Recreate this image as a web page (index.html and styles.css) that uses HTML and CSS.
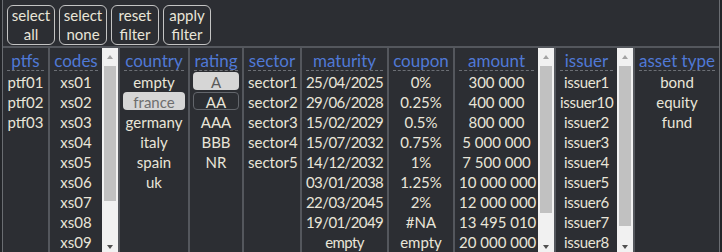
FILE: index.html
```html
<!DOCTYPE html>
<html>
<head>
<meta charset="utf-8">
<link rel="stylesheet" href="styles.css">
</head>
<body>
<div class="app">
  <div class="toolbar">
    <button class="btn">select<br>all</button>
    <button class="btn">select<br>none</button>
    <button class="btn">reset<br>filter</button>
    <button class="btn">apply<br>filter</button>
  </div>
  <div class="columns">
    <div class="col w-ptfs">
      <div class="list">
        <div class="hdr">ptfs</div>
        <div class="item">ptf01</div>
        <div class="item">ptf02</div>
        <div class="item">ptf03</div>
      </div>
    </div>
    <div class="col w-codes">
      <div class="list">
        <div class="hdr">codes</div>
        <div class="item">xs01</div>
        <div class="item">xs02</div>
        <div class="item">xs03</div>
        <div class="item">xs04</div>
        <div class="item">xs05</div>
        <div class="item">xs06</div>
        <div class="item">xs07</div>
        <div class="item">xs08</div>
        <div class="item">xs09</div>
      </div>
      <div class="scroll">
        <div class="arr-up"><span class="tri-up"></span></div>
        <div class="thumb" style="height:135px"></div>
        <div class="track-rest"></div>
        <div class="arr-down"><span class="tri-down"></span></div>
      </div>
    </div>
    <div class="col w-country">
      <div class="list">
        <div class="hdr">country</div>
        <div class="item">empty</div>
        <div class="item sel dim">france</div>
        <div class="item">germany</div>
        <div class="item">italy</div>
        <div class="item">spain</div>
        <div class="item">uk</div>
      </div>
    </div>
    <div class="col w-rating">
      <div class="list">
        <div class="hdr">rating</div>
        <div class="item sel">A</div>
        <div class="item focus">AA</div>
        <div class="item">AAA</div>
        <div class="item">BBB</div>
        <div class="item">NR</div>
      </div>
    </div>
    <div class="col w-sector">
      <div class="list">
        <div class="hdr">sector</div>
        <div class="item">sector1</div>
        <div class="item">sector2</div>
        <div class="item">sector3</div>
        <div class="item">sector4</div>
        <div class="item">sector5</div>
      </div>
    </div>
    <div class="col w-maturity">
      <div class="list tight">
        <div class="hdr">maturity</div>
        <div class="item">25/04/2025</div>
        <div class="item">29/06/2028</div>
        <div class="item">15/02/2029</div>
        <div class="item">15/07/2032</div>
        <div class="item">14/12/2032</div>
        <div class="item">03/01/2038</div>
        <div class="item">22/03/2045</div>
        <div class="item">19/01/2049</div>
        <div class="item">empty</div>
      </div>
    </div>
    <div class="col w-coupon">
      <div class="list">
        <div class="hdr">coupon</div>
        <div class="item">0%</div>
        <div class="item">0.25%</div>
        <div class="item">0.5%</div>
        <div class="item">0.75%</div>
        <div class="item">1%</div>
        <div class="item">1.25%</div>
        <div class="item">2%</div>
        <div class="item">#NA</div>
        <div class="item">empty</div>
      </div>
    </div>
    <div class="col w-amount">
      <div class="list">
        <div class="hdr">amount</div>
        <div class="item">300 000</div>
        <div class="item">400 000</div>
        <div class="item">800 000</div>
        <div class="item">5 000 000</div>
        <div class="item">7 500 000</div>
        <div class="item">10 000 000</div>
        <div class="item">12 000 000</div>
        <div class="item">13 495 010</div>
        <div class="item">20 000 000</div>
      </div>
      <div class="scroll">
        <div class="arr-up"><span class="tri-up"></span></div>
        <div class="thumb" style="height:147px"></div>
        <div class="track-rest"></div>
        <div class="arr-down"><span class="tri-down"></span></div>
      </div>
    </div>
    <div class="col w-issuer">
      <div class="list semi">
        <div class="hdr">issuer</div>
        <div class="item">issuer1</div>
        <div class="item">issuer10</div>
        <div class="item">issuer2</div>
        <div class="item">issuer3</div>
        <div class="item">issuer4</div>
        <div class="item">issuer5</div>
        <div class="item">issuer6</div>
        <div class="item">issuer7</div>
        <div class="item">issuer8</div>
      </div>
      <div class="scroll">
        <div class="arr-up"><span class="tri-up"></span></div>
        <div class="thumb" style="height:160px"></div>
        <div class="track-rest"></div>
        <div class="arr-down"><span class="tri-down"></span></div>
      </div>
    </div>
    <div class="col w-asset last">
      <div class="list">
        <div class="hdr">asset type</div>
        <div class="item">bond</div>
        <div class="item">equity</div>
        <div class="item">fund</div>
      </div>
    </div>
  </div>
</div>
</body>
</html>
```
FILE: styles.css
```css
html, body {
  margin: 0;
  padding: 0;
  background: #232529;
  height: 252px;
  overflow: hidden;
}
.app {
  margin-left: 2px;
  width: 716px;
  height: 252px;
  border-left: 1px solid #6a6d72;
  border-right: 1px solid #6a6d72;
  background: #2c2e33;
  font-family: Lato, "Noto Sans", sans-serif;
  color: #e9e5d9;
  display: flex;
  flex-direction: column;
  overflow: hidden;
}
.toolbar {
  height: 48px;
  box-sizing: border-box;
  padding: 5px 0 0 4px;
  border-bottom: 2px solid #54575d;
  display: flex;
  gap: 4px;
  align-items: flex-start;
  flex: none;
}
.btn {
  width: 48px;
  height: 40px;
  box-sizing: border-box;
  background: #2c2e33;
  border: 1.5px solid #c4c4c4;
  border-radius: 6px;
  color: #e9e5d9;
  font-family: inherit;
  font-size: 15px;
  line-height: 19px;
  padding: 0;
  text-align: center;
}
.columns {
  flex: 1;
  display: flex;
  min-height: 0;
}
.col {
  display: flex;
  border-right: 2px solid #54575d;
  flex: none;
  min-height: 0;
}
.col.last { border-right: none; flex: 1; }
.w-ptfs { width: 45px; }
.w-codes { width: 68px; }
.w-country { width: 68px; }
.w-rating { width: 52px; }
.w-sector { width: 56px; }
.w-maturity { width: 85px; }
.w-coupon { width: 64px; }
.w-amount { width: 99px; }
.w-issuer { width: 77px; }
.list {
  flex: 1;
  min-width: 0;
  overflow: hidden;
}
.list.tight .item { letter-spacing: -0.6px; }
.list.semi .item { letter-spacing: -0.3px; }
.hdr {
  height: 22px;
  line-height: 25px;
  margin: 0 4px;
  border-bottom: 1px dashed #6c6f75;
  color: #5079d6;
  font-size: 17px;
  text-align: center;
  white-space: nowrap;
}
.item {
  height: 18px;
  line-height: 18px;
  margin: 1px 3px 2px;
  box-sizing: border-box;
  border: 1px solid transparent;
  border-radius: 4px;
  text-align: center;
  font-size: 15px;
  white-space: nowrap;
}
.item.sel { background: #d6d6d6; color: #5a5a5a; }
.item.sel.dim { color: #6e6e6e; }
.item.focus { border-color: #63666c; }
.scroll {
  width: 16px;
  flex: none;
  background: #f1f1f1;
  display: flex;
  flex-direction: column;
}
.arr-up {
  height: 18px;
  display: flex;
  align-items: center;
  justify-content: center;
  flex: none;
}
.arr-down {
  height: 10px;
  display: flex;
  align-items: center;
  justify-content: center;
  flex: none;
}
.tri-up {
  width: 0; height: 0;
  border-left: 3.5px solid transparent;
  border-right: 3.5px solid transparent;
  border-bottom: 4px solid #a3a3a3;
}
.tri-down {
  width: 0; height: 0;
  border-left: 3.5px solid transparent;
  border-right: 3.5px solid transparent;
  border-top: 4px solid #505050;
}
.thumb {
  margin: 0 2px;
  background: #c1c1c1;
  flex: none;
}
.track-rest { flex: 1; }
```
